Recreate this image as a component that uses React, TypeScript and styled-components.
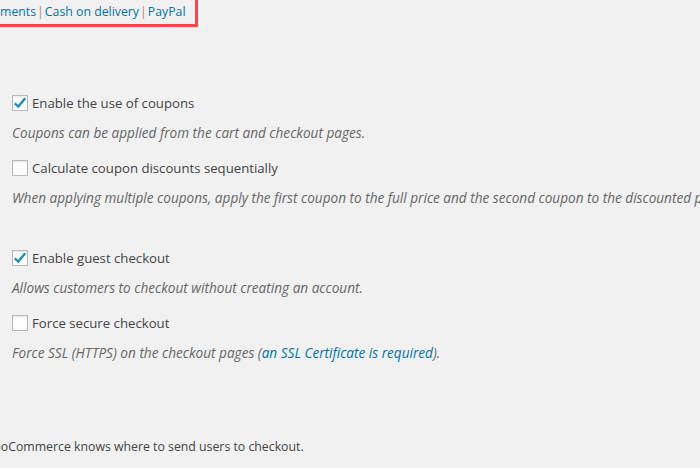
import styled, { createGlobalStyle } from 'styled-components';

const GlobalStyle = createGlobalStyle`
  html, body {
    margin: 0;
    padding: 0;
    background: #f1f1f1;
    overflow: hidden;
  }
  body {
    font-family: "Open Sans", "Noto Sans", sans-serif;
    font-size: 12.3px;
    color: #444;
  }
`;

const Page = styled.div`
  width: 700px;
  height: 468px;
  overflow: hidden;
  display: flex;
  flex-direction: column;
`;

const NavHighlight = styled.ul`
  align-self: flex-start;
  list-style: none;
  margin: -4px 0 0 -15px;
  padding: 3px 9px 2px 12px;
  border: 3px solid #f2474b;
  display: flex;
  line-height: 20px;
  white-space: nowrap;
`;

const NavItem = styled.li`
  color: #72777c;

  & + &::before {
    content: '|';
    margin: 0 1px 0 1px;
    color: #a08a6a;
  }
`;

const NavLink = styled.a`
  color: #0073aa;
  text-decoration: none;
`;

const Settings = styled.div`
  padding: 0 0 0 12px;
  margin-top: 66px;
  display: flex;
  flex-direction: column;
  gap: 40px;
  font-size: 13.2px;
`;

const Fieldset = styled.div`
  display: flex;
  flex-direction: column;
`;

const OptionRow = styled.label<{ $first?: boolean }>`
  display: flex;
  align-items: center;
  gap: 4px;
  height: 20px;
  line-height: 20px;
  margin-top: ${p => (p.$first ? '0' : '15px')};
  white-space: nowrap;
`;

const Box = styled.span`
  box-sizing: border-box;
  width: 16px;
  height: 16px;
  border: 1px solid #b4b9be;
  background: #fefefe;
  box-shadow: inset 0 1px 2px rgba(0, 0, 0, 0.1);
  display: flex;
  align-items: center;
  justify-content: center;
  flex-shrink: 0;
`;

const Description = styled.p`
  margin: 10px 0 0;
  line-height: 20px;
  font-size: 13.6px;
  font-style: italic;
  color: #666;
  white-space: nowrap;
`;

const InlineLink = styled.a`
  color: #0073aa;
  text-decoration: none;
`;

const Footnote = styled.p`
  margin: 74px 0 0 -18px;
  line-height: 20px;
  white-space: nowrap;
`;

const Check = () => (
  <svg width="14" height="14" viewBox="0 0 14 14">
    <path d="M1.8 7.4 L5.3 10.6 L12.2 2.2" fill="none" stroke="#1e8cbe" strokeWidth="2.4" />
  </svg>
);

const Checkbox = ({ checked }: { checked?: boolean }) => (
  <Box>{checked ? <Check /> : null}</Box>
);

const options = [
  [
    {
      label: 'Enable the use of coupons',
      checked: true,
      desc: <>Coupons can be applied from the cart and checkout pages.</>
    },
    {
      label: 'Calculate coupon discounts sequentially',
      checked: false,
      desc: <>When applying multiple coupons, apply the first coupon to the full price and the second coupon to the discounted price and so on.</>
    }
  ],
  [
    {
      label: 'Enable guest checkout',
      checked: true,
      desc: <>Allows customers to checkout without creating an account.</>
    },
    {
      label: 'Force secure checkout',
      checked: false,
      desc: <>Force SSL (HTTPS) on the checkout pages (<InlineLink href="#">an SSL Certificate is required</InlineLink>).</>
    }
  ]
];

export default function App() {
  return (
    <Page>
      <GlobalStyle />
      <NavHighlight>
        <NavItem><NavLink href="#">ments</NavLink></NavItem>
        <NavItem><NavLink href="#">Cash on delivery</NavLink></NavItem>
        <NavItem><NavLink href="#">PayPal</NavLink></NavItem>
      </NavHighlight>
      <Settings>
        {options.map((group, gi) => (
          <Fieldset key={gi}>
            {group.map((opt, i) => (
              <div key={i}>
                <OptionRow $first={i === 0}>
                  <Checkbox checked={opt.checked} />
                  {opt.label}
                </OptionRow>
                <Description>{opt.desc}</Description>
              </div>
            ))}
          </Fieldset>
        ))}
      </Settings>
      <Footnote>WooCommerce knows where to send users to checkout.</Footnote>
    </Page>
  );
}
